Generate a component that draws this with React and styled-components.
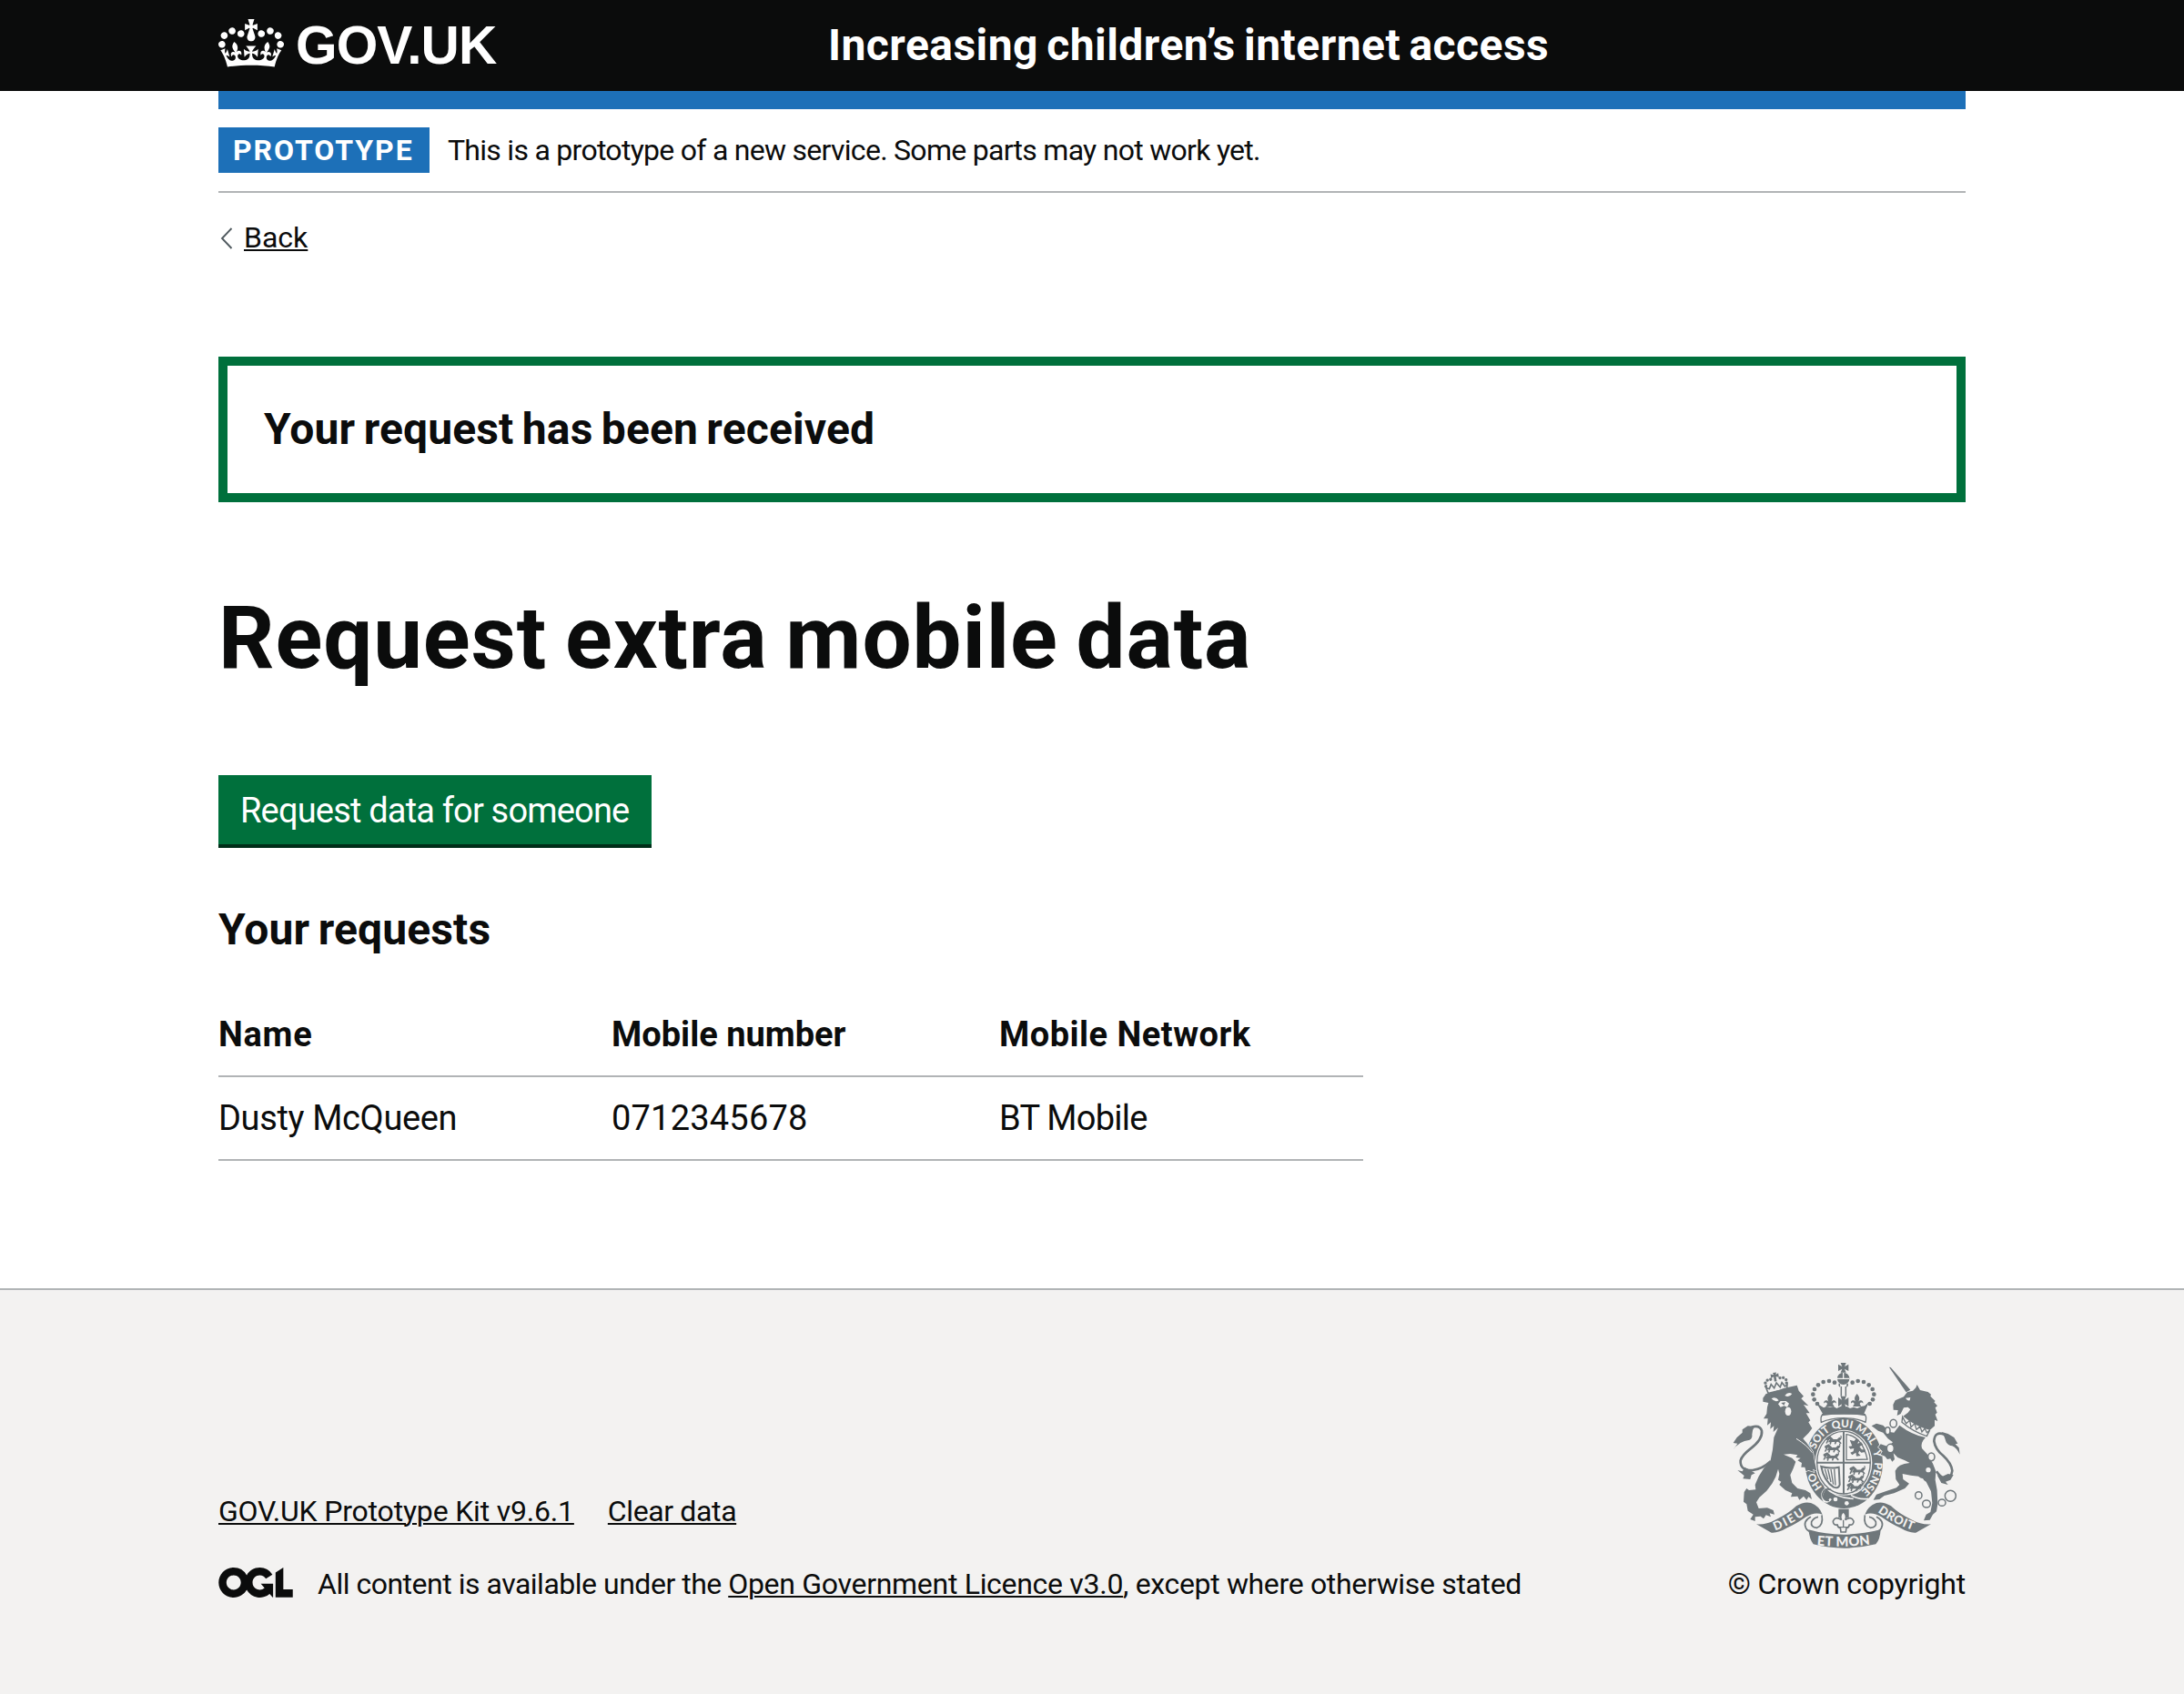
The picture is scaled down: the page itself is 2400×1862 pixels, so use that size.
import React from "react";
import styled, { createGlobalStyle } from "styled-components";

const ink = "#0b0c0c";
const rule = "#b1b4b6";
const green = "#00703c";
const blue = "#1d70b8";
const crest = "#6f777b";
const paper = "#f3f2f1";

const GlobalStyle = createGlobalStyle`
  *, *::before, *::after { box-sizing: border-box; }
  body {
    margin: 0;
    background: #fff;
    color: ${ink};
    font-family: Roboto, "Liberation Sans", sans-serif;
    font-size: 32px;
    line-height: 40px;
  }
`;

const Page = styled.div`
  display: flex;
  flex-direction: column;
  min-height: 1862px;
`;

const Container = styled.div`
  width: 1920px;
  margin: 0 auto;
`;

const HeaderBar = styled.header`
  height: 100px;
  background: ${ink};
  color: #fff;
`;

const HeaderRow = styled(Container)`
  display: grid;
  grid-template-columns: 670px 1fr;
  align-items: center;
  height: 100px;
`;

const Logo = styled.a`
  display: flex;
  align-items: center;
  gap: 13px;
`;

const CrownIcon = styled.svg`
  width: 72px;
  height: 53px;
  margin-bottom: 5px;
  fill: currentColor;
`;

const Logotype = styled.span`
  font-family: "Liberation Sans", Arial, sans-serif;
  font-size: 58.6px;
  line-height: 60px;
  font-weight: 700;
  letter-spacing: -0.9px;
`;

const ServiceName = styled.a`
  font-size: 48px;
  line-height: 60px;
  font-weight: 700;
  letter-spacing: 0.45px;
  word-spacing: -3px;
  white-space: nowrap;
`;

const BlueBar = styled(Container)`
  height: 20px;
  background: ${blue};
`;

const PhaseBanner = styled(Container)`
  display: flex;
  align-items: center;
  gap: 20px;
  padding: 20px 0;
  border-bottom: 2px solid ${rule};
`;

const Tag = styled.strong`
  width: 232px;
  height: 50px;
  padding: 0 0 0 16px;
  background: ${blue};
  color: #fff;
  line-height: 50px;
  letter-spacing: 1.95px;
`;

const Text = styled.span`
  letter-spacing: ${(p) => p.$track || 0}px;
  white-space: pre;
`;

const TextLink = styled.a`
  color: ${ink};
  letter-spacing: ${(p) => p.$track || 0}px;
  text-decoration: underline;
  text-decoration-thickness: 2px;
  text-underline-offset: 2px;
  white-space: nowrap;
`;

const BackRow = styled(Container)`
  display: flex;
  align-items: center;
  gap: 12px;
  margin-top: 29px;
`;

const Chevron = styled.svg`
  width: 16px;
  height: 24px;
  margin-top: 2px;
  fill: none;
  stroke: #505a5f;
  stroke-width: 1.9;
`;

const Main = styled.main`
  width: 1920px;
  margin: 111px auto 0;
  padding-bottom: 140px;
`;

const Panel = styled.section`
  display: flex;
  align-items: center;
  height: 160px;
  padding: 0 40px;
  border: 10px solid ${green};
`;

const Heading = styled.h2`
  margin: 0;
  font-size: 48px;
  line-height: 60px;
  font-weight: 700;
  letter-spacing: 0.15px;
  word-spacing: -2.8px;
`;

const Title = styled.h1`
  margin: 99px 0 101px;
  font-size: 96px;
  line-height: 100px;
  font-weight: 700;
  letter-spacing: 0.9px;
  word-spacing: -5px;
`;

const StartButton = styled.button`
  display: block;
  width: 476px;
  height: 76px;
  margin: 0 0 64px;
  padding: 2px 0 0 24px;
  border: 0;
  background: ${green};
  box-shadow: 0 4px 0 #002d18;
  color: #fff;
  font: 400 38px/50px Roboto, "Liberation Sans", sans-serif;
  letter-spacing: -0.82px;
  text-align: left;
`;

const Table = styled.div`
  width: 1258px;
  margin-top: 40px;
`;

const Row = styled.div`
  display: grid;
  grid-template-columns: 432px 426px 1fr;
  align-items: center;
  height: 92px;
  border-bottom: 2px solid ${rule};
  font-size: 38px;
  line-height: 50px;
  font-weight: ${(p) => (p.$head ? 700 : 400)};
`;

const FooterBand = styled.footer`
  flex: 1;
  padding: 80px 0 101px;
  border-top: 2px solid ${rule};
  background: ${paper};
`;

const FooterRow = styled(Container)`
  display: flex;
  justify-content: space-between;
  align-items: flex-end;
`;

const FooterMeta = styled.div`
  display: flex;
  flex-direction: column;
  gap: 40px;
`;

const FooterLinks = styled.nav`
  display: flex;
  gap: 37px;
`;

const Licence = styled.div`
  display: flex;
  align-items: center;
`;

const OglIcon = styled.svg`
  width: 82px;
  height: 33px;
  margin: 0 27px 4px 0;
  fill: ${ink};
`;

const Copyright = styled.a`
  display: flex;
  flex-direction: column;
  align-items: center;
  gap: 19px;
`;

const ArmsIcon = styled.svg`
  width: 250px;
  height: 204px;
  fill: ${crest};
  font-family: Lato, "Liberation Sans", sans-serif;
  font-weight: 900;
`;

const Crown = () => (
  <CrownIcon viewBox="0 0 132 97">
    <path d="M25 30.2c3.5 1.5 7.7-.2 9.1-3.7 1.5-3.6-.2-7.8-3.9-9.2-3.6-1.4-7.6.3-9.1 3.9-1.4 3.5.3 7.5 3.9 9zM9 39.5c3.6 1.5 7.8-.2 9.2-3.7 1.5-3.6-.2-7.8-3.9-9.1-3.6-1.5-7.6.2-9.1 3.8-1.4 3.5.3 7.5 3.8 9zM4.4 57.2c3.5 1.5 7.7-.2 9.1-3.8 1.5-3.6-.2-7.7-3.9-9.1-3.5-1.5-7.6.3-9.1 3.8-1.4 3.5.3 7.6 3.9 9.1zm38.3-21.4c3.5 1.5 7.7-.2 9.1-3.8 1.5-3.6-.2-7.7-3.9-9.1-3.6-1.5-7.6.3-9.1 3.8-1.3 3.6.4 7.7 3.9 9.1zm64.4-5.6c-3.6 1.5-7.8-.2-9.1-3.7-1.5-3.6.2-7.8 3.8-9.2 3.6-1.4 7.7.3 9.2 3.9 1.3 3.5-.4 7.5-3.9 9zm15.9 9.3c-3.6 1.5-7.7-.2-9.1-3.7-1.5-3.6.2-7.8 3.7-9.1 3.6-1.5 7.7.2 9.2 3.8 1.5 3.5-.3 7.5-3.8 9zm4.7 17.7c-3.6 1.5-7.8-.2-9.2-3.8-1.5-3.6.2-7.7 3.9-9.1 3.6-1.5 7.7.3 9.2 3.8 1.3 3.5-.4 7.6-3.9 9.1zM89.3 35.8c-3.6 1.5-7.8-.2-9.2-3.8-1.4-3.6.2-7.7 3.9-9.1 3.6-1.5 7.7.3 9.2 3.8 1.4 3.6-.3 7.7-3.9 9.1zM69.7 17.7l8.9 4.7V9.3l-8.9 2.8c-.2-.3-.5-.6-.9-.9L72.4 0H59.6l3.5 11.2c-.3.3-.6.5-.9.9l-8.8-2.8v13.1l8.8-4.7c.3.3.6.7.9.9l-5 15.4v.1c-.2.8-.4 1.6-.4 2.4 0 4.1 3.1 7.5 7 8.1h.2c.3 0 .7.1 1 .1.4 0 .7 0 1-.1h.2c4-.6 7.1-4.1 7.1-8.1 0-.8-.1-1.7-.4-2.4V34l-5.1-15.4c.4-.2.7-.6 1-.9zM66 92.8c16.9 0 32.8 1.1 47.1 3.2 4-16.9 8.9-26.7 14-33.5l-9.6-3.4c1 4.9 1.1 7.2 0 10.2-1.5-1.4-3-4.3-4.2-8.7L108.6 76c2.8-2 5-3.2 7.5-3.3-4.4 9.4-10 11.9-13.6 11.2-4.3-.8-6.3-4.6-5.6-7.9 1-4.7 5.7-5.9 8-.5 4.3-8.7-3-11.4-7.6-8.8 7.1-7.2 7.9-13.5 2.1-21.1-8 6.1-8.1 12.3-4.5 20.8-4.7-5.4-12.1-2.5-9.5 6.2 3.4-5.2 7.9-2 7.2 3.1-.6 4.3-6.4 7.8-13.5 7.2-10.3-.9-10.9-8-11.2-13.8 2.5-.5 7.1 1.8 11 7.3L80.2 60c-4.1 4.4-8 5.3-12.3 5.4 1.4-4.4 8-11.6 8-11.6H55.5s6.4 7.2 7.9 11.6c-4.2-.1-8-1-12.3-5.4l1.4 16.4c3.9-5.5 8.5-7.7 10.9-7.3-.3 5.8-.9 12.8-11.1 13.8-7.2.6-12.9-2.9-13.5-7.2-.7-5 3.8-8.3 7.1-3.1 2.7-8.7-4.6-11.6-9.4-6.2 3.7-8.5 3.6-14.7-4.6-20.8-5.8 7.6-5 13.9 2.2 21.1-4.7-2.6-11.9.1-7.7 8.8 2.3-5.5 7.1-4.2 8.1.5.7 3.3-1.3 7.1-5.7 7.9-3.5.7-9-1.8-13.5-11.2 2.5.1 4.7 1.3 7.5 3.3l-4.7-15.4c-1.2 4.4-2.7 7.2-4.3 8.7-1.1-3-.9-5.3 0-10.2l-9.5 3.4c5 6.9 9.9 16.7 14 33.5 14.8-2.1 30.8-3.2 47.7-3.2z" />
  </CrownIcon>
);

const Ogl = () => (
  <OglIcon viewBox="0 0 483.2 195.7">
    <path d="M421.5 142.8V.1l-50.7 32.3v161.1h112.4v-50.7zm-122.3-9.6A47.12 47.12 0 0 1 221 97.8c0-26 21.1-47.1 47.1-47.1 16.7 0 31.4 8.7 39.7 21.8l42.7-27.2A97.63 97.63 0 0 0 268.1 0c-36.5 0-68.3 20.1-85.1 49.7A98 98 0 0 0 97.8 0C43.9 0 0 43.9 0 97.8s43.9 97.8 97.8 97.8c36.5 0 68.3-20.1 85.1-49.7a97.76 97.76 0 0 0 149.6 25.4l19.4 22.2h3v-87.8h-80l24.3 27.5zM97.8 145c-26 0-47.1-21.1-47.1-47.1s21.1-47.1 47.1-47.1 47.1 21.1 47.1 47.1S123.8 145 97.8 145" />
  </OglIcon>
);

const crownPearls = [
  [408, 119], [390, 114], [371, 117], [354, 127], [342, 141], [337, 158], [341, 175], [351, 189],
];

const lionPearls = [
  [180, 126], [180, 115], [188, 107], [199, 106], [230, 106], [241, 107], [249, 115], [249, 126],
];

const mottoWords = [
  ["HO", "16%"], ["SOIT", "37.2%"], ["QUI", "49.2%"], ["MAL", "61%"], ["Y", "71.1%"], ["PENSE", "83%"],
];

const PassantLions = ({ x, y }) => (
  <g transform={`translate(${x} ${y})`} fill="none" stroke={crest} strokeWidth="9" strokeLinecap="round">
    {[0, 27, 54].map((dy) => (
      <g key={dy} transform={`translate(${-dy * 0.16} ${dy})`}>
        <path d="M10 6l8-4 6 6-3 5 24-1 6-6" />
        <path d="M14 8l-6 12M22 14l-2 9M40 12l-4 10M46 12l8 9" strokeWidth="5" />
        <path d="M50 8q8-2 5-11" strokeWidth="3.5" />
      </g>
    ))}
  </g>
);

const RoyalArms = () => (
  <ArmsIcon viewBox="72 54 750 612">
    <defs>
      <path id="motto-ring" d="M439 497A101 115 0 0 1 439 267A101 115 0 0 1 439 497" />
      <path id="motto-left" d="M212 607Q266 587 318 549" />
      <path id="motto-right" d="M550 546Q600 583 674 609" />
      <path id="motto-base" d="M340 654Q437 665 540 651" />
      <path id="fleur" d="M0-22C9-12 10-4 4 4C12-4 22 0 20 10C17 5 10 6 9 12L14 20H-14L-9 12C-10 6-17 5-20 10C-22 0-12-4-4 4C-10-4-9-12 0-22Z" />
    </defs>

    {/* garter and shield */}
    <ellipse cx="439" cy="385" rx="128" ry="149" />
    <ellipse cx="438" cy="383" rx="94" ry="108" fill={paper} />
    <ellipse cx="438" cy="383" rx="88" ry="103" fill="none" stroke={crest} strokeWidth="4" />
    <path d="M435 279h6v208h-6zM349 380h178v6H349z" />
    <PassantLions x={374} y={298} />
    <PassantLions x={452} y={398} />
    <path d="M447 290Q500 298 516 372L447 374Z" fill="none" stroke={crest} strokeWidth="4" />
    <path d="M458 308l14 4 8-8 8 4-4 12 12-4 6 8-12 6 8 10 10 0 2 8-14 2-6-6-4 8 8 8-14 2-2-12-12 8-6-8 10-4 2-10-12 2-6-8 12-2z" />
    <path d="M364 396q26 8 58 2l3 58q-4 14-20 8-32-20-41-68z" fill="none" stroke={crest} strokeWidth="6" />
    <path d="M376 404l10 34M386 405l10 42M396 405l8 50M407 404l4 54" stroke={crest} strokeWidth="4" />
    <text fill={paper} fontSize="35" textAnchor="middle">
      {mottoWords.map(([word, at]) => (
        <textPath key={word} href="#motto-ring" startOffset={at}>{word}</textPath>
      ))}
    </text>
    <path d="M374 462Q412 500 470 502" fill="none" stroke={paper} strokeWidth="5" />
    <path d="M378 470q-20 16-4 40 12 6 22-8" fill="none" stroke={paper} strokeWidth="7" />
    <path d="M396 472q-26-6-28 16 2 22 22 20" fill="none" stroke={crest} strokeWidth="5" />
    <path d="M452 488Q486 486 504 462" fill="none" stroke={paper} strokeWidth="4" />
    <path d="M462 490Q486 506 520 502" fill="none" stroke={paper} strokeWidth="5" />
    <circle cx="411" cy="504" r="7" fill={paper} />
    <circle cx="448" cy="517" r="7" fill={paper} />

    {/* crown */}
    <path d="M364 250Q360 224 374 222H502Q516 224 510 250Q480 236 438 236T364 250Z" fill={paper} stroke={crest} strokeWidth="4" />
    <path d="M347 184l13 10 12 8 9-4 12 2 12-2 10 6 12-6 10 2 12-2 10 6 12-4 12 4 12-6 12-2 14-12-16 38H369z" />
    <path d="M366 226q72-12 144 0" fill="none" stroke={crest} strokeWidth="5" />
    <use href="#fleur" x="393" y="178" />
    <use href="#fleur" x="482" y="178" />
    <path d="M420 168l12 8-4-12h18l-4 12 12-8v30l-12-8 4 14h-18l4-14-12 8z" />
    {crownPearls.map(([x, y]) => (
      <g key={x}>
        <circle cx={x} cy={y} r="7" />
        <circle cx={875 - x} cy={y} r="7" />
      </g>
    ))}
    <path d="M424 122q-2 7 2 10M450 122q2 7-2 10" fill="none" stroke={crest} strokeWidth="5" />
    <path d="M430 132v32M445 132v32" stroke={crest} strokeWidth="4.500" />
    <circle cx="437" cy="106" r="20" />
    <path d="M417 106h40M437 86v20" stroke={paper} strokeWidth="4" />
    <path d="M428 54h18l-5 12 13-7v22l-13-7 5 12h-18l5-12-13 7V59l13 7z" />

    {/* lion */}
    <path
      stroke={paper}
      strokeWidth="4"
      paintOrder="stroke"
      d="M172 170L182 156L200 152L240 138L284 128L290 146L306 164L298 172L322 196L306 192L326 220L314 220L328 244L322 250L334 270L322 286L304 304L316 318L336 346L342 378L349 410L336 404L340 414L322 408L314 412L310 398L298 398L300 384L286 376L296 368L280 366L286 358L262 354L240 356L268 368L280 380L272 402L262 424L268 450L286 468L312 474L328 484L333 504L322 496L316 506L306 494L292 506L286 494L264 496L268 484L246 474L226 456L232 446L222 440L226 420L222 404L214 430L202 452L184 476L160 498L150 514L158 534L186 532L206 540L210 554L194 550L198 562L182 556L174 568L164 560L146 562L146 576L130 570L140 554L122 542L118 520L108 512L110 480L118 468L126 474L148 472L146 456L158 428L176 400L196 380L204 340L208 300L222 268L206 282L208 262L196 272L198 250L186 260L188 238L174 238L184 222L186 200L190 186L172 182Z"
    />
    <path d="M200 172Q214 164 224 178Q212 186 200 172ZM244 162Q254 148 268 156Q258 170 244 162Z" fill={paper} />
    <path d="M222 190L230 180H248L258 188L252 200L242 196L230 200Z" fill={paper} />
    <path d="M232 186L246 184L241 194Z" />
    <ellipse cx="255" cy="214" rx="10" ry="14" fill={paper} />
    <path d="M282 304Q318 326 334 350" fill="none" stroke={paper} strokeWidth="3" />
    <path d="M198 378Q170 404 138 408Q96 410 98 376Q104 358 130 338Q172 306 168 278Q162 258 134 266" fill="none" stroke={crest} strokeWidth="8" />
    <path d="M73 342L88 320L74 318L86 300L104 284L104 274L122 262L144 264Q136 276 136 290Q138 302 128 308Q92 312 73 342ZM88 408L104 412L112 398L140 414L146 418L134 424L130 438L106 436L110 426Z" />
    <g transform="rotate(-9 215 118)">
      <path d="M184 150l-4-18 10 4 8-14 8 14 10-16 10 16 8-14 8 14 8-4-4 18q-30-5-62 0z" fill="none" stroke={crest} strokeWidth="5" />
      {lionPearls.map(([x, y]) => (
        <circle key={`${x}-${y}`} cx={x} cy={y} r="5" />
      ))}
      <path d="M209 86h12l-3 7 9-4v14l-9-4v16h-8V99l-9 4V89l10 4z" />
    </g>

    {/* unicorn */}
    <path d="M588 68L593 69L658 143L644 151Z" />
    <path d="M601 192L608 178L636 166L648 150L666 146L676 136L680 126L690 144L716 150L726 158L724 164L740 180L736 184L747 196L740 202L746 218L740 224L748 246L738 242L738 262L722 276Q672 262 634 230L650 218L658 208L650 200L636 202L626 222L614 228L617 210L602 209Z" />
    <path d="M642 170L658 168L656 178Q648 180 642 170Z" fill={paper} />
    <path d="M632 232L630 250Q668 282 712 296L722 276L712 284L706 270L696 282L690 264L678 274L672 254L660 266L656 244L644 254Z" fill="none" stroke={crest} strokeWidth="4" />
    <path
      stroke={paper}
      strokeWidth="4"
      paintOrder="stroke"
      d="M622 260Q664 292 708 300Q690 318 696 336L716 358L732 386L742 412L740 440L746 474L748 520L744 544L732 554L722 572L702 574L710 554L724 546L730 516L726 478L710 446L684 428Q660 426 632 420L634 438L654 452L640 468L604 484L572 492L556 504L536 506L546 488L576 478L612 466L622 456L610 438L608 410Q616 388 656 384L640 376L616 366L602 352L606 372L598 380L592 370L582 372L574 362L560 356L566 346L552 332L560 322L584 330L600 316L584 304L568 284L552 278L530 262L546 254L568 260L590 282L604 284Z"
    />
    <g fill="none" stroke={crest} strokeWidth="4.500">
      <ellipse cx="602" cy="254" rx="11" ry="13" fill={paper} />
      <ellipse cx="583" cy="278" rx="8" ry="12" fill={paper} />
      <ellipse cx="592" cy="336" rx="12" ry="14" fill={paper} />
      <ellipse cx="727" cy="364" rx="11" ry="13" fill={paper} />
      <ellipse cx="685" cy="491" rx="11" ry="12" />
      <ellipse cx="711" cy="519" rx="13" ry="12" />
      <ellipse cx="762" cy="515" rx="12" ry="11" />
      <circle cx="790" cy="493" r="18" />
    </g>
    <circle cx="717" cy="407" r="8" fill={paper} />
    <circle cx="694" cy="442" r="8" fill={paper} />
    <path d="M770 290Q738 278 736 312Q740 340 766 360Q794 386 796 410Q792 438 770 436Q756 430 744 412" fill="none" stroke={crest} strokeWidth="8" />
    <path d="M821 356L818 334L806 322L814 320L802 300L782 288L762 282Q772 300 776 316Q784 328 796 328Q812 336 821 356ZM746 424L764 428L782 420L800 424L790 440L774 446L782 456L760 450Z" />

    {/* ribbons */}
    <path d="M150 586Q184 588 212 572Q256 552 282 526Q308 510 330 516Q358 526 368 554Q342 544 314 562Q280 586 252 598Q222 616 200 614Z" />
    <path d="M726 586Q692 588 664 572Q620 552 594 526Q568 510 546 516Q518 526 508 554Q534 544 562 562Q596 586 624 598Q654 616 676 614Z" />
    <path d="M322 604Q434 636 560 604Q558 638 544 652Q438 678 338 652Q326 638 322 604Z" />
    <g fill="none" stroke={crest} strokeWidth="5">
      <path d="M366 556q6 34-16 42-22-2-18-20 8-14 22-16M330 562q-28 14-16 38 8 12 28 14" />
      <path d="M508 556q-6 34 18 42 22-2 18-20-8-14-22-16M546 562q28 14 16 38-8 12-28 14" />
    </g>
    <g fill={paper} fontSize="39">
      <text><textPath href="#motto-left" textLength="112">DIEU</textPath></text>
      <text><textPath href="#motto-right" textLength="130">DROIT</textPath></text>
      <text fontSize="44"><textPath href="#motto-base" startOffset="10" textLength="176">ET MON</textPath></text>
    </g>
    <path d="M421 536h34v28h-34z" />
    <path d="M437 544q14 14 6 28 20-14 28 4 0 14-14 12-2 10-10 10l-2 14h-16l-2-14q-8 0-10-10-14 2-14-12 8-18 28-4-8-14 6-28z" fill={paper} stroke={crest} strokeWidth="5" />
    <path d="M420 596h34M437 572v22" stroke={crest} strokeWidth="4" />
  </ArmsIcon>
);

export default function App() {
  return (
    <Page>
      <GlobalStyle />
      <HeaderBar>
        <HeaderRow>
          <Logo>
            <Crown />
            <Logotype>GOV.UK</Logotype>
          </Logo>
          <ServiceName>Increasing children’s internet access</ServiceName>
        </HeaderRow>
      </HeaderBar>
      <BlueBar />
      <PhaseBanner>
        <Tag>PROTOTYPE</Tag>
        <Text $track={-0.72}>This is a prototype of a new service. Some parts may not work yet.</Text>
      </PhaseBanner>
      <BackRow>
        <Chevron viewBox="0 0 16 24">
          <path d="M14.5 1L4 12l10.500 11" />
        </Chevron>
        <TextLink>Back</TextLink>
      </BackRow>

      <Main>
        <Panel>
          <Heading>Your request has been received</Heading>
        </Panel>
        <Title>Request extra mobile data</Title>
        <StartButton>Request data for someone</StartButton>
        <Heading>Your requests</Heading>
        <Table>
          <Row $head>
            <Text $track={0.7}>Name</Text>
            <Text>Mobile number</Text>
            <Text $track={0.48}>Mobile Network</Text>
          </Row>
          <Row>
            <Text $track={-0.35}>Dusty McQueen</Text>
            <Text $track={0.2}>0712345678</Text>
            <Text $track={-0.75}>BT Mobile</Text>
          </Row>
        </Table>
      </Main>

      <FooterBand>
        <FooterRow>
          <FooterMeta>
            <FooterLinks>
              <TextLink $track={-0.19}>GOV.UK Prototype Kit v9.6.1</TextLink>
              <TextLink $track={-0.38}>Clear data</TextLink>
            </FooterLinks>
            <Licence>
              <Ogl />
              <Text $track={-0.49}>All content is available under the </Text>
              <TextLink $track={-0.3}>Open Government Licence v3.0</TextLink>
              <Text $track={-0.34}>, except where otherwise stated</Text>
            </Licence>
          </FooterMeta>
          <Copyright>
            <RoyalArms />
            <Text $track={-0.22}>© Crown copyright</Text>
          </Copyright>
        </FooterRow>
      </FooterBand>
    </Page>
  );
}
